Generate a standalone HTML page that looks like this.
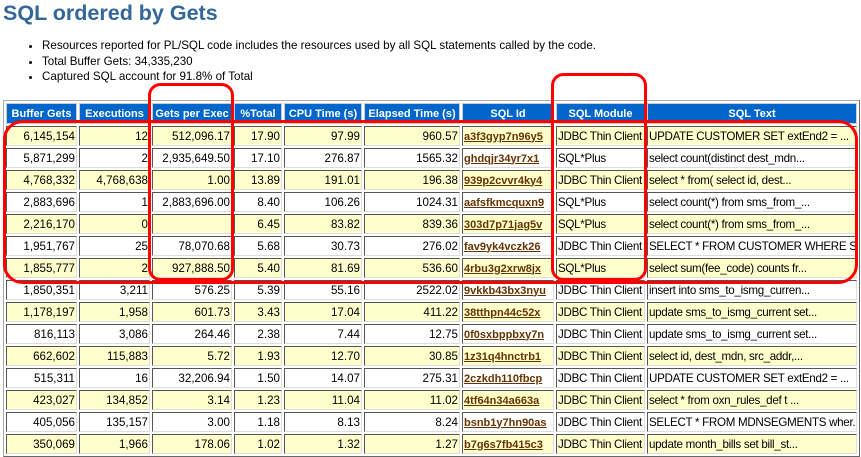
<!DOCTYPE html>
<html><head><meta charset="utf-8"><style>
body{margin:0;background:#fff;width:861px;height:457px;overflow:hidden;position:relative;font-family:"Liberation Sans",Tahoma,sans-serif;}
h1{position:absolute;left:3px;top:0;margin:0;font-size:21.5px;font-weight:bold;color:#336699;line-height:26px;}
ul{position:absolute;left:0;top:38px;margin:0;padding:0 0 0 42px;font-size:11.6px;color:#000;line-height:15.5px;}
ul li{list-style:disc;}
table{position:absolute;left:3px;top:100px;width:857px;border-collapse:separate;border-spacing:2px;table-layout:fixed;border:1px solid #aaa;border-right-color:#666;border-bottom-color:#666;}
td,th{padding:0 1px;height:18px;font-size:11.6px;white-space:nowrap;overflow:hidden;border:1px solid;border-color:#555 #ddd #ddd #555;}
th{background:#0066cc;color:#fff;font-weight:bold;font-size:11px;height:19px;border-color:#ccc;text-align:center;padding:0;}
td{text-align:right;}
td.l{text-align:left;letter-spacing:-0.3px;}
tr.y td{background:#ffffcc;}
tr.w td{background:#fff;}
a{color:#663300;font-weight:bold;text-decoration:underline;font-size:11px;letter-spacing:0;}
svg{position:absolute;left:0;top:0;}
</style></head><body>
<h1>SQL ordered by Gets</h1>
<ul>
<li>Resources reported for PL/SQL code includes the resources used by all SQL statements called by the code.</li>
<li>Total Buffer Gets: 34,335,230</li>
<li>Captured SQL account for 91.8% of Total</li>
</ul>
<table>
<colgroup><col style="width:71px"><col style="width:71px"><col style="width:80px"><col style="width:48px"><col style="width:78px"><col style="width:96px"><col style="width:92px"><col style="width:89px"><col style="width:210px"></colgroup>
<tr><th>Buffer Gets</th><th>Executions</th><th>Gets per Exec</th><th>%Total</th><th>CPU Time (s)</th><th>Elapsed Time (s)</th><th>SQL Id</th><th>SQL Module</th><th>SQL Text</th></tr>
<tr class="y"><td>6,145,154</td><td>12</td><td>512,096.17</td><td>17.90</td><td>97.99</td><td>960.57</td><td class="l"><a>a3f3gyp7n96y5</a></td><td class="l">JDBC Thin Client</td><td class="l">UPDATE CUSTOMER SET extEnd2 = ...</td></tr>
<tr class="w"><td>5,871,299</td><td>2</td><td>2,935,649.50</td><td>17.10</td><td>276.87</td><td>1565.32</td><td class="l"><a>ghdqjr34yr7x1</a></td><td class="l">SQL*Plus</td><td class="l">select count(distinct dest_mdn...</td></tr>
<tr class="y"><td>4,768,332</td><td>4,768,638</td><td>1.00</td><td>13.89</td><td>191.01</td><td>196.38</td><td class="l"><a>939p2cvvr4ky4</a></td><td class="l">JDBC Thin Client</td><td class="l">select * from( select id, dest...</td></tr>
<tr class="w"><td>2,883,696</td><td>1</td><td>2,883,696.00</td><td>8.40</td><td>106.26</td><td>1024.31</td><td class="l"><a>aafsfkmcquxn9</a></td><td class="l">SQL*Plus</td><td class="l">select count(*) from sms_from_...</td></tr>
<tr class="y"><td>2,216,170</td><td>0</td><td></td><td>6.45</td><td>83.82</td><td>839.36</td><td class="l"><a>303d7p71jag5v</a></td><td class="l">SQL*Plus</td><td class="l">select count(*) from sms_from_...</td></tr>
<tr class="w"><td>1,951,767</td><td>25</td><td>78,070.68</td><td>5.68</td><td>30.73</td><td>276.02</td><td class="l"><a>fav9yk4vczk26</a></td><td class="l">JDBC Thin Client</td><td class="l">SELECT * FROM CUSTOMER WHERE S...</td></tr>
<tr class="y"><td>1,855,777</td><td>2</td><td>927,888.50</td><td>5.40</td><td>81.69</td><td>536.60</td><td class="l"><a>4rbu3g2xrw8jx</a></td><td class="l">SQL*Plus</td><td class="l">select sum(fee_code) counts fr...</td></tr>
<tr class="w"><td>1,850,351</td><td>3,211</td><td>576.25</td><td>5.39</td><td>55.16</td><td>2522.02</td><td class="l"><a>9vkkb43bx3nyu</a></td><td class="l">JDBC Thin Client</td><td class="l">insert into sms_to_ismg_curren...</td></tr>
<tr class="y"><td>1,178,197</td><td>1,958</td><td>601.73</td><td>3.43</td><td>17.04</td><td>411.22</td><td class="l"><a>38tthpn44c52x</a></td><td class="l">JDBC Thin Client</td><td class="l">update sms_to_ismg_current set...</td></tr>
<tr class="w"><td>816,113</td><td>3,086</td><td>264.46</td><td>2.38</td><td>7.44</td><td>12.75</td><td class="l"><a>0f0sxbppbxy7n</a></td><td class="l">JDBC Thin Client</td><td class="l">update sms_to_ismg_current set...</td></tr>
<tr class="y"><td>662,602</td><td>115,883</td><td>5.72</td><td>1.93</td><td>12.70</td><td>30.85</td><td class="l"><a>1z31q4hnctrb1</a></td><td class="l">JDBC Thin Client</td><td class="l">select id, dest_mdn, src_addr,...</td></tr>
<tr class="w"><td>515,311</td><td>16</td><td>32,206.94</td><td>1.50</td><td>14.07</td><td>275.31</td><td class="l"><a>2czkdh110fbcp</a></td><td class="l">JDBC Thin Client</td><td class="l">UPDATE CUSTOMER SET extEnd2 = ...</td></tr>
<tr class="y"><td>423,027</td><td>134,852</td><td>3.14</td><td>1.23</td><td>11.04</td><td>11.02</td><td class="l"><a>4tf64n34a663a</a></td><td class="l">JDBC Thin Client</td><td class="l">select * from oxn_rules_def t ...</td></tr>
<tr class="w"><td>405,056</td><td>135,157</td><td>3.00</td><td>1.18</td><td>8.13</td><td>8.24</td><td class="l"><a>bsnb1y7hn90as</a></td><td class="l">JDBC Thin Client</td><td class="l">SELECT * FROM MDNSEGMENTS wher...</td></tr>
<tr class="y"><td>350,069</td><td>1,966</td><td>178.06</td><td>1.02</td><td>1.32</td><td>1.27</td><td class="l"><a>b7g6s7fb415c3</a></td><td class="l">JDBC Thin Client</td><td class="l">update month_bills set bill_st...</td></tr>
</table>
<svg width="861" height="457" viewBox="0 0 861 457">
<g fill="none" stroke="#f00" stroke-width="3">
<rect x="4.5" y="121.5" width="852" height="161" rx="18"/>
<rect x="149.5" y="84.5" width="83" height="195" rx="11"/>
<rect x="552.5" y="74.5" width="93" height="205" rx="11"/>
</g></svg>
</body></html>
